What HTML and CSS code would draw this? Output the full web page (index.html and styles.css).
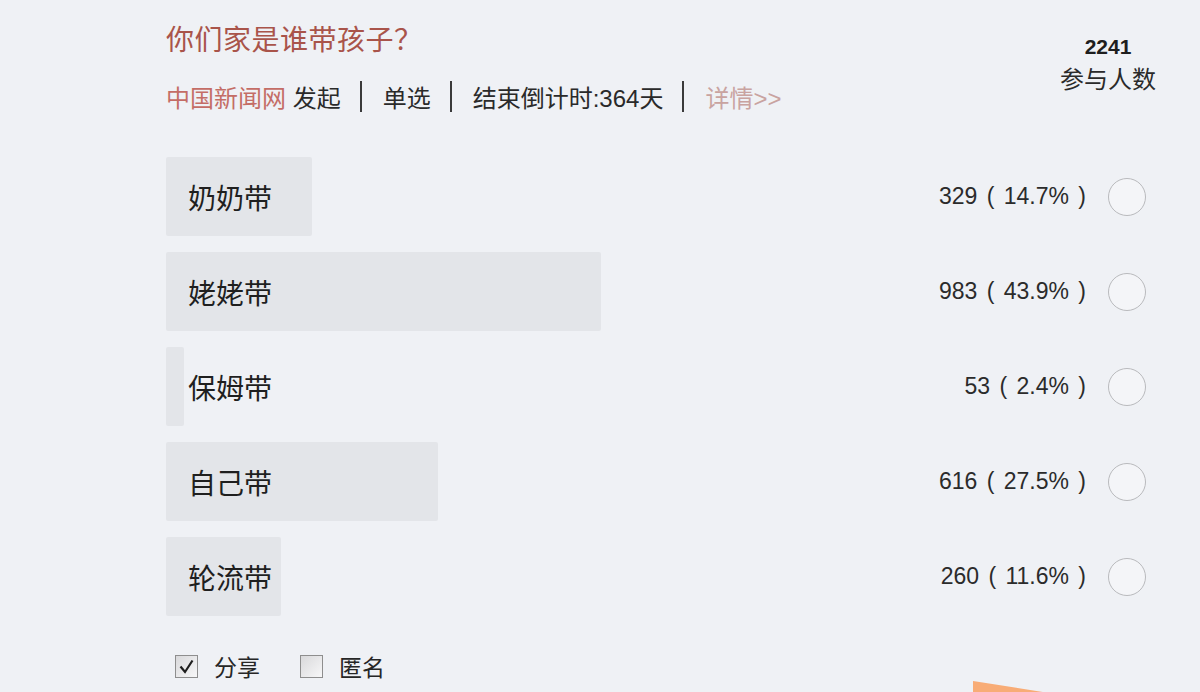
FILE: index.html
```html
<!DOCTYPE html>
<html lang="zh-CN">
<head>
  <meta charset="UTF-8">
  <title>你们家是谁带孩子？</title>
  <link rel="stylesheet" href="styles.css">
</head>
<body>
<div class="vote">
  <div class="vote-head">
    <div>
      <h3 class="vote-title">你们家是谁带孩子？</h3>
      <div class="vote-meta">
        <span class="src">中国新闻网</span>&nbsp;<span>发起</span>
        <span class="sep"></span>
        <span>单选</span>
        <span class="sep"></span>
        <span>结束倒计时:364天</span>
        <span class="sep"></span>
        <span class="more">详情&gt;&gt;</span>
      </div>
    </div>
    <div class="stat">
      <div class="stat-num">2241</div>
      <div class="stat-txt">参与人数</div>
    </div>
  </div>

  <div class="options">
    <div class="opt">
      <div class="fill" style="width: 14.7%"></div>
      <span class="opt-name">奶奶带</span>
      <span class="opt-count">329 ( 14.7% )</span>
      <span class="radio"></span>
    </div>
    <div class="opt">
      <div class="fill" style="width: 43.9%"></div>
      <span class="opt-name">姥姥带</span>
      <span class="opt-count">983 ( 43.9% )</span>
      <span class="radio"></span>
    </div>
    <div class="opt">
      <div class="fill" style="width: 1.8%"></div>
      <span class="opt-name">保姆带</span>
      <span class="opt-count">53 ( 2.4% )</span>
      <span class="radio"></span>
    </div>
    <div class="opt">
      <div class="fill" style="width: 27.5%"></div>
      <span class="opt-name">自己带</span>
      <span class="opt-count">616 ( 27.5% )</span>
      <span class="radio"></span>
    </div>
    <div class="opt">
      <div class="fill" style="width: 11.6%"></div>
      <span class="opt-name">轮流带</span>
      <span class="opt-count">260 ( 11.6% )</span>
      <span class="radio"></span>
    </div>
  </div>

  <div class="vote-foot">
    <label class="chk">
      <span class="box">
        <svg width="19" height="19" viewBox="0 0 19 19"><path d="M3.5 9.5 L8 15 L15.5 3.5" fill="none" stroke="#1e1e1e" stroke-width="2.2"/></svg>
      </span>
      分享
    </label>
    <label class="chk">
      <span class="box"></span>
      匿名
    </label>
  </div>
  <div class="submit"></div>
</div>
</body>
</html>
```

FILE: styles.css
```css
body {
  margin: 0;
  background: #eff1f5;
  font-family: "Liberation Sans", "Noto Sans CJK SC", sans-serif;
  color: #262626;
  overflow: hidden;
}

.vote {
  width: 990px;
  margin-left: 166px;
}

.vote-head {
  display: flex;
  justify-content: space-between;
  padding-top: 23px;
}

.vote-title {
  margin: 0;
  font-size: 28px;
  line-height: 36px;
  font-weight: normal;
  color: #a9544a;
  letter-spacing: 0.5px;
}

.vote-meta {
  display: flex;
  align-items: center;
  margin-top: 22px;
  height: 30px;
  font-size: 24px;
  color: #2a2a2a;
}

.vote-meta .src {
  color: #c46d66;
}

.vote-meta .more {
  color: #c9a3a0;
}

.sep {
  width: 0;
  height: 31px;
  border-left: 2px solid #3a3a3a;
  margin: 0 21px 0 19px;
}

.stat {
  text-align: center;
  padding-top: 11px;
}

.stat-num {
  font-size: 21px;
  font-weight: bold;
  line-height: 26px;
  color: #1e1e1e;
}

.stat-txt {
  font-size: 24px;
  line-height: 30px;
  margin-top: 5px;
  color: #2a2a2a;
}

.options {
  margin-top: 46px;
  display: flex;
  flex-direction: column;
  gap: 16px;
}

.opt {
  display: grid;
  grid-template-columns: 1fr auto auto;
  align-items: center;
  column-gap: 22px;
  height: 79px;
}

.fill {
  grid-column: 1 / -1;
  grid-row: 1;
  height: 79px;
  background: #e3e5e9;
  border-radius: 2px;
}

.opt-name {
  grid-column: 1;
  grid-row: 1;
  padding-left: 22px;
  font-size: 28px;
  color: #1f1f1f;
}

.opt-count {
  grid-column: 2;
  grid-row: 1;
  font-size: 23px;
  word-spacing: 3px;
  color: #2b2b2b;
}

.radio {
  grid-column: 3;
  grid-row: 1;
  width: 36px;
  height: 36px;
  margin-right: 10px;
  border: 1.5px solid #b9babd;
  border-radius: 50%;
  background: #f4f5f8;
}

.vote-foot {
  display: flex;
  align-items: center;
  gap: 40px;
  margin-top: 36px;
  padding-left: 9px;
  height: 28px;
  font-size: 23px;
  color: #262626;
}

.chk {
  display: flex;
  align-items: center;
  gap: 16px;
}

.box {
  display: flex;
  align-items: center;
  justify-content: center;
  width: 21px;
  height: 21px;
  border: 1px solid #8e8e8e;
  background: linear-gradient(135deg, #d9d9db, #f7f7f8);
}

.submit {
  margin: 1px 0 0 807px;
  width: 76px;
  height: 12px;
  background: #f8ac76;
  clip-path: polygon(0 0, 100% 100%, 0 100%);
}
```
